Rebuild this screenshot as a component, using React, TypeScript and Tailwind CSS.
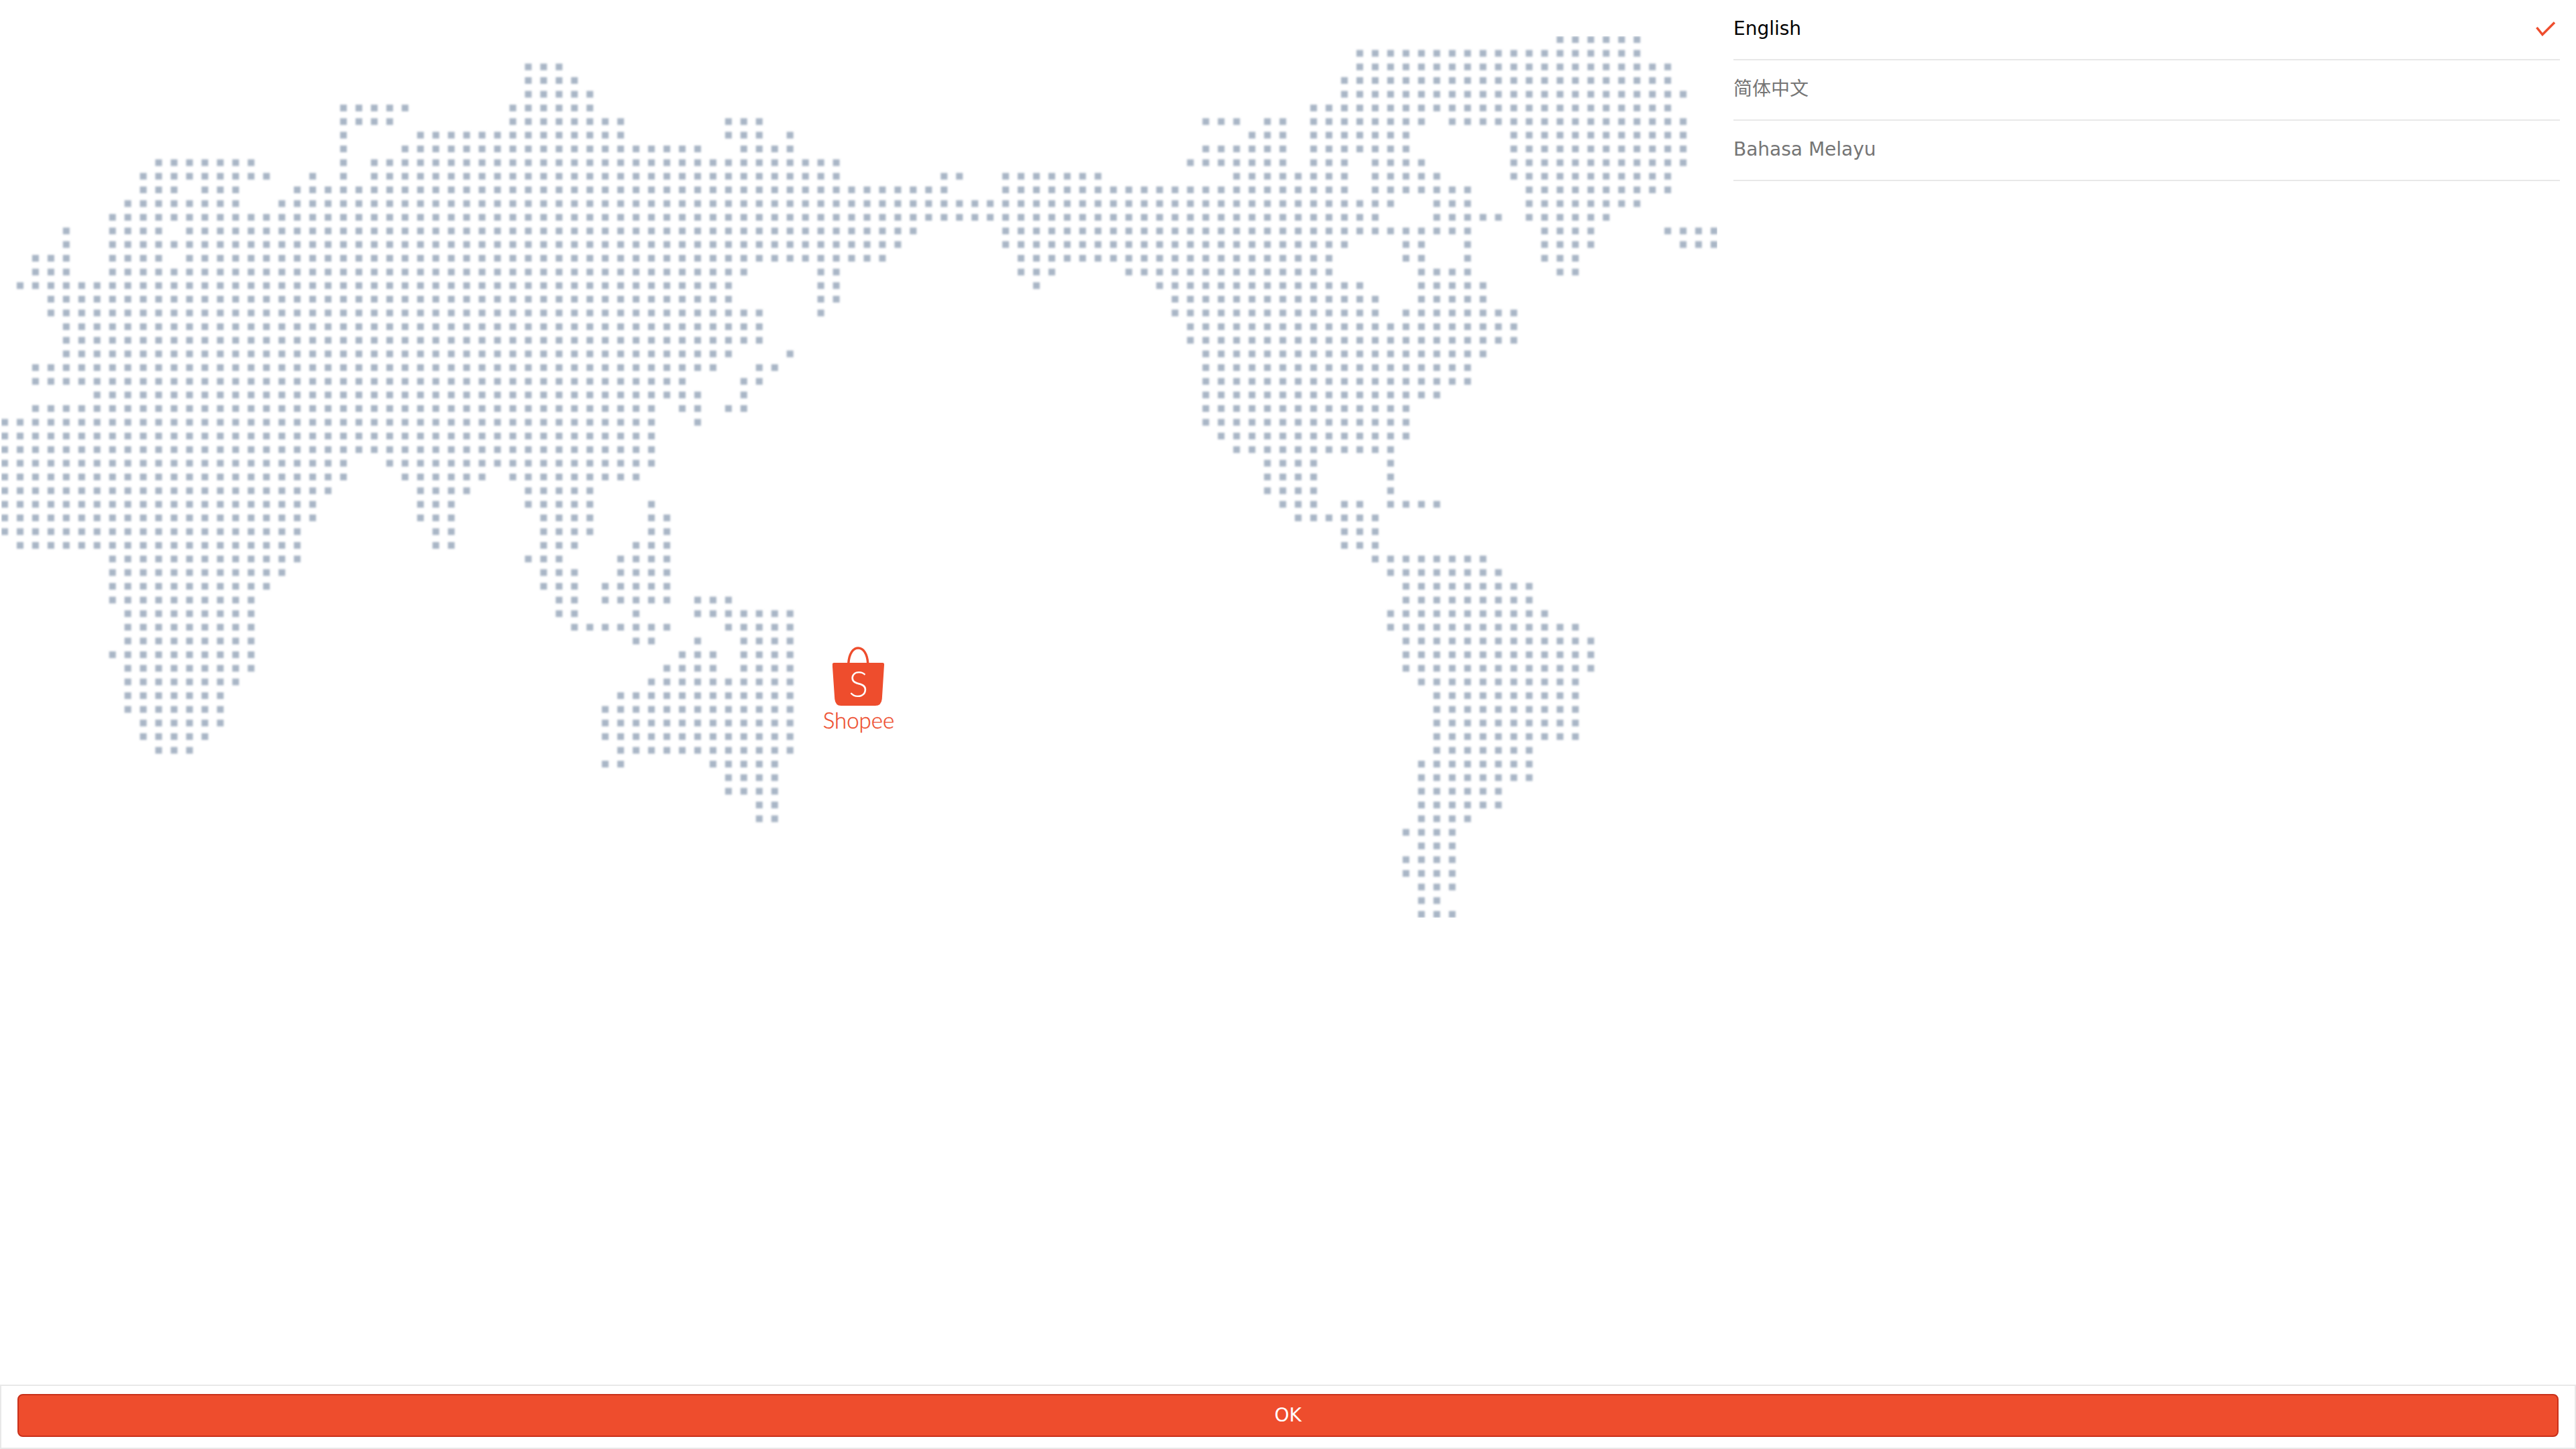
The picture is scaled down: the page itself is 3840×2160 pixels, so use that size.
import React from 'react';

// column ranges per dot row, flat [from, to, from, to, ...]
const MAP_ROWS: number[][] = [
  [101, 106],
  [88, 106],
  [34, 36, 88, 108],
  [34, 37, 87, 108],
  [34, 38, 87, 109],
  [22, 26, 33, 38, 85, 108],
  [22, 25, 33, 40, 47, 49, 78, 80, 82, 83, 85, 92, 94, 109],
  [22, 22, 27, 40, 47, 49, 51, 51, 81, 83, 85, 91, 98, 109],
  [22, 22, 26, 45, 48, 51, 78, 83, 85, 91, 98, 109],
  [10, 16, 22, 22, 24, 54, 77, 83, 85, 87, 89, 92, 98, 109],
  [9, 17, 20, 20, 22, 22, 24, 54, 61, 62, 65, 71, 80, 87, 89, 93, 98, 108],
  [9, 11, 13, 15, 19, 61, 65, 87, 89, 95, 99, 108],
  [8, 15, 18, 90, 93, 95, 99, 106],
  [7, 89, 93, 97, 99, 104],
  [4, 4, 7, 10, 12, 59, 65, 95, 100, 103, 108, 111],
  [4, 4, 7, 58, 65, 87, 91, 92, 95, 95, 100, 103, 109, 111],
  [2, 4, 7, 10, 12, 57, 66, 86, 91, 92, 95, 95, 100, 102],
  [2, 4, 7, 48, 53, 54, 66, 68, 73, 86, 92, 95, 101, 102],
  [1, 47, 53, 54, 67, 67, 75, 88, 92, 96],
  [3, 47, 53, 54, 76, 89, 92, 96],
  [3, 49, 53, 53, 76, 89, 91, 98],
  [4, 49, 77, 98],
  [4, 49, 77, 98],
  [4, 47, 51, 51, 78, 96],
  [2, 46, 49, 50, 78, 95],
  [2, 44, 48, 49, 78, 95],
  [6, 45, 48, 48, 78, 93],
  [2, 42, 44, 45, 47, 48, 78, 91],
  [0, 42, 45, 45, 78, 91],
  [0, 42, 79, 91],
  [0, 42, 80, 90],
  [0, 22, 25, 42, 82, 85, 90, 90],
  [0, 22, 26, 31, 33, 41, 82, 85, 90, 90],
  [0, 21, 27, 30, 34, 38, 82, 85, 90, 90],
  [0, 20, 27, 29, 34, 38, 42, 42, 83, 85, 87, 88, 90, 93],
  [0, 20, 27, 29, 35, 38, 42, 43, 84, 89],
  [0, 19, 28, 29, 35, 38, 42, 43, 87, 89],
  [1, 19, 28, 29, 35, 37, 41, 43, 87, 89],
  [7, 19, 34, 36, 40, 43, 89, 96],
  [7, 18, 35, 37, 40, 43, 90, 97],
  [7, 17, 35, 37, 39, 43, 91, 99],
  [7, 16, 36, 37, 39, 43, 45, 47, 91, 99],
  [8, 16, 36, 37, 41, 41, 45, 51, 90, 100],
  [8, 16, 37, 43, 47, 51, 90, 102],
  [8, 16, 41, 42, 45, 45, 48, 51, 91, 103],
  [7, 16, 44, 46, 48, 51, 91, 103],
  [8, 16, 43, 46, 48, 51, 91, 103],
  [8, 15, 42, 51, 92, 102],
  [8, 14, 40, 51, 93, 102],
  [8, 14, 39, 51, 93, 102],
  [9, 14, 39, 51, 93, 102],
  [9, 13, 39, 51, 93, 102],
  [10, 12, 40, 51, 93, 99],
  [39, 40, 46, 50, 92, 99],
  [47, 50, 92, 99],
  [47, 50, 92, 97],
  [49, 50, 92, 97],
  [49, 50, 92, 95],
  [91, 94],
  [92, 94],
  [91, 94],
  [91, 94],
  [92, 94],
  [92, 93],
  [92, 94],
];

const buildDots = () => {
  let d = '';
  MAP_ROWS.forEach((ranges, row) => {
    for (let i = 0; i < ranges.length; i += 2) {
      for (let col = ranges[i]; col <= ranges[i + 1]; col++) {
        const x = 2 + col * 22.955;
        const y = 2 + row * 20.375;
        d += `M${x.toFixed(1)} ${y.toFixed(1)}h10v10h-10z`;
      }
    }
  });
  return d;
};

const DotMap = () => (
  <svg width="2560" height="1317" viewBox="0 0 2560 1317" className="mt-[52px] block">
    <defs>
      <filter id="soft" x="0" y="0" width="100%" height="100%">
        <feGaussianBlur stdDeviation="1.8" />
      </filter>
    </defs>
    <path d={buildDots()} fill="#a9b6c6" filter="url(#soft)" />
  </svg>
);

const ShopeeLogo = () => (
  <div className="absolute left-1/2 top-[964px] flex -translate-x-1/2 flex-col items-center">
    <svg width="78" height="88" viewBox="0 0 78 88" className="block">
      <path d="M24 25C25 10 31 2 38.5 2C46 2 52 10 53 25" fill="none" stroke="#ee4d2d" strokeWidth="3.5" />
      <path
        d="M2.5 24H75Q77.5 24 77.3 26.5L74 78Q73 88 64 88H13Q4.5 88 3.5 78L0 26.5Q0 24 2.500 24Z"
        fill="#ee4d2d"
      />
      <text
        x="39"
        y="75"
        textAnchor="middle"
        fill="#ffffff"
        fontSize="54"
        fontWeight="300"
        fontFamily="Lato, sans-serif"
      >
        S
      </text>
    </svg>
    <span className="mt-[1px] font-['Lato',sans-serif] text-[33px] font-light leading-[40px] text-[#ee4d2d] [-webkit-text-stroke:0.4px_#ee4d2d]">
      Shopee
    </span>
  </div>
);

const LANGUAGES = [
  { label: 'English', selected: true },
  { label: '简体中文', selected: false },
  { label: 'Bahasa Melayu', selected: false },
];

export default function App() {
  return (
    <div className="flex h-screen flex-col bg-white font-['DejaVu_Sans','Noto_Sans_CJK_SC',sans-serif]">
      <div className="flex min-h-0 flex-1">
        <div className="relative w-[2560px] shrink-0">
          <DotMap />
          <ShopeeLogo />
        </div>
        <ul className="flex-1 px-6">
          {LANGUAGES.map((lang) => (
            <li
              key={lang.label}
              className={`flex h-[90px] items-center justify-between border-b-2 border-[#e8e8e8] pb-[2px] text-[28px] ${
                lang.selected ? 'text-black' : 'text-[#757575]'
              }`}
            >
              <span>{lang.label}</span>
              {lang.selected && (
                <svg width="30" height="22" viewBox="0 0 30 22" className="mr-[6px]">
                  <path d="M1.5 9L10 19.500L28 1.500" fill="none" stroke="#ee4d2d" strokeWidth="3.500" />
                </svg>
              )}
            </li>
          ))}
        </ul>
      </div>
      <div className="h-[96px] border-2 border-[#e8e8e8] px-6 pb-[14px] pt-3">
        <button className="h-[64px] w-full rounded-lg border-2 border-[#c9301a] bg-[#ee4d2d] text-[28px] text-white">
          OK
        </button>
      </div>
    </div>
  );
}
